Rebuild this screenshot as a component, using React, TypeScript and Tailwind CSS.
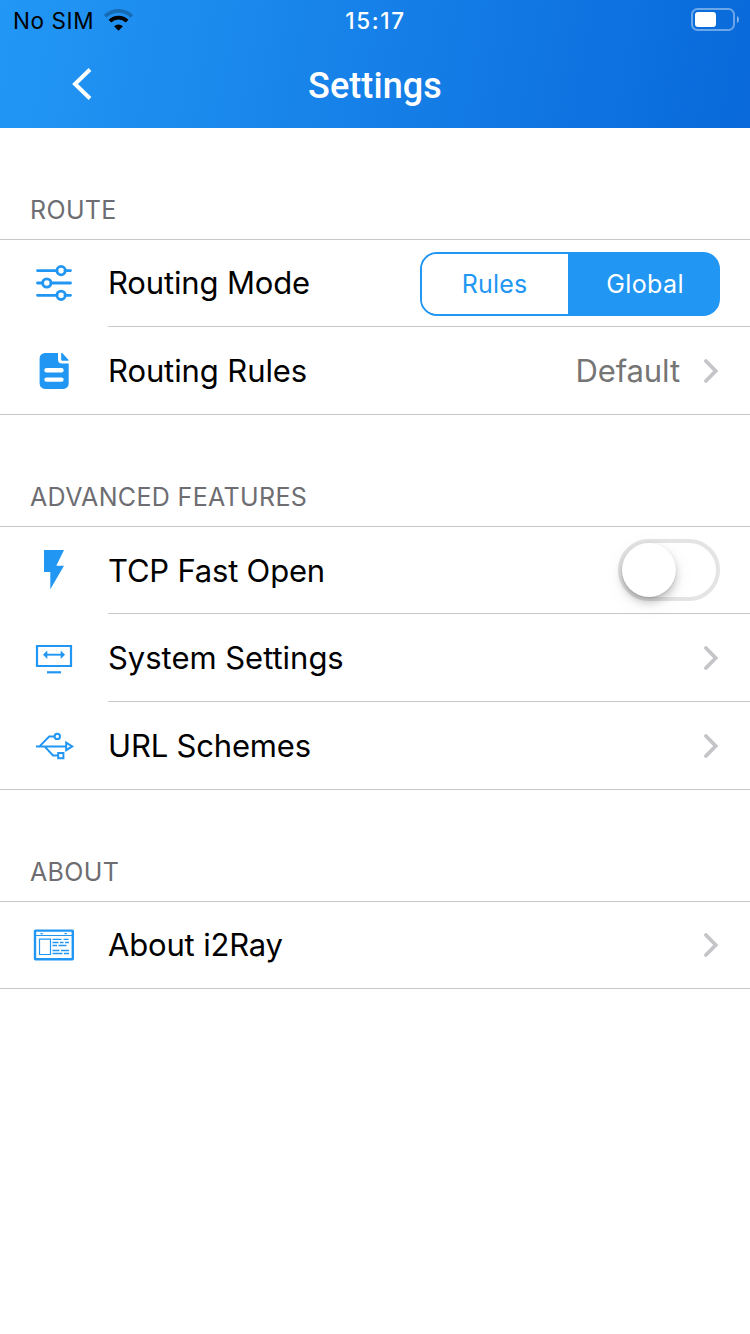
import type { ReactNode } from 'react';

const BLUE = '#2196f3';

function Chevron() {
  return (
    <svg width="18" height="28" viewBox="0 0 18 28" fill="none" className="block shrink-0">
      <path d="M3.900 4l9.800 10-9.800 10" stroke="#c5c5c9" strokeWidth="3.800" strokeLinecap="round" strokeLinejoin="miter" />
    </svg>
  );
}

function SlidersIcon() {
  return (
    <svg width="44" height="44" viewBox="32 262 44 44" fill="none" stroke={BLUE} strokeWidth="2.800" strokeLinecap="round">
      <path d="M37.500 270.600H57M65 270.600h5.500M37.500 283h5M51 283h19.500M37.500 295.300H57M65 295.300h5.500" />
      <circle cx="61.100" cy="270.600" r="4.200" />
      <circle cx="46.800" cy="283" r="4.200" />
      <circle cx="61.100" cy="295.300" r="4.200" />
    </svg>
  );
}

function DocumentIcon() {
  return (
    <svg width="44" height="44" viewBox="32 349 44 44">
      <path d="M45 353h13v6.500a4 4 0 0 0 4 4h6.700v20a5.400 5.400 0 0 1-5.400 5.400H45a5.400 5.400 0 0 1-5.400-5.400v-25A5.400 5.400 0 0 1 45 353z" fill={BLUE} />
      <path d="M61.200 353h1l6.400 7v.800h-6a1.400 1.400 0 0 1-1.400-1.400z" fill={BLUE} />
      <path d="M46.500 370.200h15M46.500 379.600h15" stroke="#fff" strokeWidth="4.400" strokeLinecap="round" />
    </svg>
  );
}

function BoltIcon() {
  return (
    <svg width="44" height="44" viewBox="32 549 44 44">
      <path d="M44 550h20l-7.700 15.700H64L50.300 589.300V572H44z" fill={BLUE} />
    </svg>
  );
}

function MonitorIcon() {
  return (
    <svg width="44" height="44" viewBox="32 636 44 44">
      <path d="M37 646h34v20H37z" fill="none" stroke={BLUE} strokeWidth="2.200" />
      <path d="M47 672.300h14" stroke={BLUE} strokeWidth="2.200" />
      <path d="M46 654.700h16" stroke={BLUE} strokeWidth="1.900" />
      <path d="M43 654.700l4.300-4.200v8.400zM65 654.700l-4.300-4.200v8.400z" fill={BLUE} />
    </svg>
  );
}

function UsbIcon() {
  return (
    <svg width="44" height="44" viewBox="32 724 44 44" fill="none" stroke={BLUE} strokeWidth="2">
      <path d="M36 746.400h30M39.500 746.400l9.700-9.800h5M44.500 746.400l8.500 9h5" />
      <circle cx="57.300" cy="736.400" r="2.700" />
      <path d="M58.200 753h5.200v5.200h-5.200zM66.200 742.600v7.600l6-3.800z" />
    </svg>
  );
}

function BrowserIcon() {
  return (
    <svg width="44" height="44" viewBox="32 924 44 44" fill="none" stroke={BLUE}>
      <rect x="35" y="930.600" width="37.800" height="28.600" rx=".5" strokeWidth="2.400" />
      <path d="M35 935.500h38" strokeWidth="1.200" />
      <path d="M40.500 933.600h2.300M64.500 933.600h2.300" strokeWidth="1.400" />
      <path d="M39.500 939.200h11v15.300h-11z" strokeWidth="1.200" />
      <path d="M52.500 939.400h9M63.500 939.400h5M52.500 942.500h6M60 942.500h3.500M65 942.500h4M52.500 945.500h4.500M58.500 945.500h8M52.500 950.500h7M61 950.500h8M52.500 953.500h10M64 953.500h5" strokeWidth="1.400" />
    </svg>
  );
}

function SectionTitle({ children }: { children: ReactNode }) {
  return (
    <div className="h-[112px] border-b border-[#c8c7cc] pt-[66px] pl-[30px] text-[25px] leading-8 tracking-[0.350px] text-[#6d6d72]">
      {children}
    </div>
  );
}

type RowProps = {
  icon: ReactNode;
  label: string;
  labelClass: string;
  height?: string;
  last?: boolean;
  children: ReactNode;
};

function Row({ icon, label, labelClass, height = 'h-[88px]', last = false, children }: RowProps) {
  return (
    <div className={`flex ${height} ${last ? 'border-b border-[#c8c7cc]' : ''}`}>
      <div className="w-[108px] shrink-0 pt-[22px] pl-8">{icon}</div>
      <div className={`flex flex-1 items-start justify-between pr-[30px] ${last ? '' : 'border-b border-[#c8c7cc]'}`}>
        <span className={`text-[31px] leading-10 whitespace-nowrap ${labelClass}`}>{label}</span>
        {children}
      </div>
    </div>
  );
}

export default function App() {
  return (
    <div className="min-h-[1334px] w-[750px] bg-white font-['Inter',sans-serif] text-black">
      <header className="h-32 bg-[linear-gradient(100deg,#2297f5_0%,#0969da_100%)]">
        <div className="grid h-10 grid-cols-3 items-center text-[22.500px] leading-10">
          <div className="flex items-center pt-px pl-[13px]">
            <span className="tracking-[0.600px]">No SIM</span>
            <svg width="30" height="24" viewBox="0 0 30 24" className="ml-[10px]" fill="none">
              <path d="M1.200 7.300a19 19 0 0 1 26.600 0" stroke="#000" strokeOpacity=".25" strokeWidth="3.800" />
              <path d="M5.900 12.100a12.500 12.500 0 0 1 17.200 0" stroke="#000" strokeWidth="3.900" />
              <path d="M14.500 21.700l-4.400-4.400a6.200 6.200 0 0 1 8.800 0z" fill="#000" />
            </svg>
          </div>
          <span className="pt-px pl-px text-center font-medium tracking-[1.600px] text-white">15:17</span>
          <div className="flex justify-end pr-[10px] pb-[2px]">
            <svg width="49" height="24" viewBox="0 0 49 24">
              <rect x="1" y="1" width="42" height="21" rx="5.500" fill="none" stroke="#fff" strokeOpacity=".4" strokeWidth="2" />
              <rect x="4" y="4" width="21" height="15" rx="3" fill="#fff" />
              <path d="M46 8v7q2-1 2-3.500T46 8z" fill="#fff" fillOpacity=".5" />
            </svg>
          </div>
        </div>
        <div className="grid h-[88px] grid-cols-3 items-center">
          <button className="pl-[70px]" aria-label="Back">
            <svg width="24" height="34" viewBox="0 0 24 34" fill="none">
              <path d="M20 2.500L5 17l15 14.500" stroke="#fff" strokeWidth="4" />
            </svg>
          </button>
          <h1 className="pt-1 text-center font-['Roboto',sans-serif] text-[36px] leading-10 font-medium tracking-[0.100px] text-white">Settings</h1>
        </div>
      </header>

      <SectionTitle>ROUTE</SectionTitle>
      <Row icon={<SlidersIcon />} label="Routing Mode" labelClass="pt-[23px] tracking-[-0.150px]" height="h-[87px]">
        <div className="mt-3 flex h-16 w-[300px] overflow-hidden rounded-[17px] border-2 border-[#2196f3] bg-[linear-gradient(to_right,#fff_50%,#2196f3_50%)] text-[25px]">
          <span className="flex w-[146px] items-center justify-center bg-white pt-[2px] pr-px tracking-[0.200px] text-[#2196f3]">Rules</span>
          <span className="flex flex-1 items-center justify-center bg-[#2196f3] pt-[2px] pl-1 tracking-[0.400px] text-white">Global</span>
        </div>
      </Row>
      <Row icon={<DocumentIcon />} label="Routing Rules" labelClass="pt-6 tracking-[-0.100px]" last>
        <div className="flex items-center gap-[22px] pt-6">
          <span className="text-[31px] leading-10 tracking-[-0.100px] text-[#757575]">Default</span>
          <Chevron />
        </div>
      </Row>

      <SectionTitle>ADVANCED FEATURES</SectionTitle>
      <Row icon={<BoltIcon />} label="TCP Fast Open" labelClass="pt-6 tracking-[-0.200px]" height="h-[87px]">
        <div className="mt-3 h-[62px] w-[102px] rounded-full border-4 border-[#e4e4e4]">
          <div className="size-[54px] rounded-full bg-white shadow-[0_5px_8px_rgba(0,0,0,0.22),0_1px_2px_rgba(0,0,0,0.12),0_6px_24px_rgba(0,0,0,0.06)]" />
        </div>
      </Row>
      <Row icon={<MonitorIcon />} label="System Settings" labelClass="pt-6 tracking-[-0.030px]">
        <div className="pt-[30px]"><Chevron /></div>
      </Row>
      <Row icon={<UsbIcon />} label="URL Schemes" labelClass="pt-6 tracking-[-0.180px]" last>
        <div className="pt-[30px]"><Chevron /></div>
      </Row>

      <SectionTitle>ABOUT</SectionTitle>
      <Row icon={<BrowserIcon />} label="About i2Ray" labelClass="pt-[23px] tracking-[-0.170px]" height="h-[87px]" last>
        <div className="pt-[29px]"><Chevron /></div>
      </Row>
    </div>
  );
}
